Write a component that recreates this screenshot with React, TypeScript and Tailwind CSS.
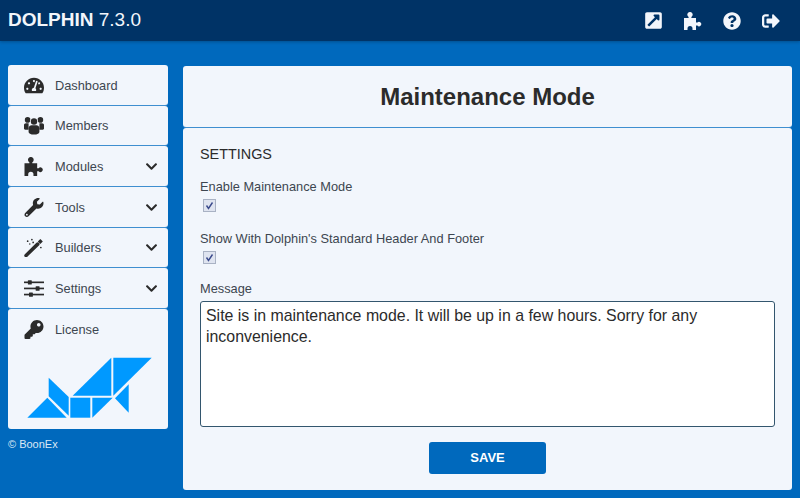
import type { ComponentType, ReactNode } from 'react';
import {
  FaChevronDown,
  FaExternalLinkSquareAlt,
  FaKey,
  FaQuestionCircle,
  FaSignOutAlt,
  FaTachometerAlt,
  FaWrench,
} from 'react-icons/fa';

type IconProps = { className?: string };
type NavItem = { label: string; icon: ComponentType<IconProps>; more?: boolean };

// font awesome 4 look, the package only has the newer shapes
function Puzzle({ className }: IconProps) {
  return (
    <svg viewBox="0 0 18 18" fill="currentColor" className={className}>
      <path d="M0 6h4.6V5a2.7 2.7 0 1 1 2.8 0v1H12v4.6h1.4a2.2 2.2 0 1 1 0 3H12V18H8.5v-1.5a2.5 2.5 0 0 0-5 0V18H0z" />
    </svg>
  );
}

function Users({ className }: IconProps) {
  return (
    <svg viewBox="0 0 20 18" fill="currentColor" className={className}>
      <circle cx="3.6" cy="3.4" r="2.8" />
      <circle cx="16.4" cy="3.4" r="2.8" />
      <path d="M0 12V8.6C0 7.5.9 6.8 2 6.8h2.6v6.4H1.2C.5 13.2 0 12.7 0 12zM20 12V8.6c0-1.1-.9-1.8-2-1.8h-2.6v6.4h3.4c.7 0 1.2-.5 1.2-1.2z" />
      <circle cx="10" cy="5" r="3.8" fill="#f2f6fc" />
      <circle cx="10" cy="5" r="3.2" />
      <path d="M4.6 15.4v-3.6c0-2 1.5-3 3-3h4.8c1.5 0 3 1 3 3v3.6c0 1.5-2 2.6-5.4 2.6s-5.4-1.1-5.4-2.6z" />
    </svg>
  );
}

function Wand({ className }: IconProps) {
  return (
    <svg viewBox="0 0 18 18" fill="currentColor" className={className}>
      <path d="M1.5 16.5 12.5 5.8" stroke="currentColor" strokeWidth="3.4" strokeLinecap="round" />
      <path d="M13.8 4.5 16.2 2.2" stroke="currentColor" strokeWidth="3.4" />
      <circle cx="3" cy="3" r=".8" />
      <circle cx="7" cy="1.5" r=".8" />
      <circle cx="8.2" cy="4.2" r=".8" />
      <circle cx="5" cy="5.6" r=".7" />
      <circle cx="15.5" cy="9" r=".8" />
    </svg>
  );
}

function Sliders({ className }: IconProps) {
  return (
    <svg viewBox="0 0 18 15" fill="currentColor" className={className}>
      <rect x="0" y="1.2" width="18" height="1.5" />
      <rect x="0" y="6.7" width="18" height="1.5" />
      <rect x="0" y="12.2" width="18" height="1.5" />
      <rect x="3.5" y="0" width="3.5" height="4" rx=".5" />
      <rect x="10.5" y="5.5" width="3.5" height="4" rx=".5" />
      <rect x="4.5" y="11" width="3.5" height="4" rx=".5" />
    </svg>
  );
}

const nav: NavItem[] = [
  { label: 'Dashboard', icon: FaTachometerAlt },
  { label: 'Members', icon: Users },
  { label: 'Modules', icon: Puzzle, more: true },
  { label: 'Tools', icon: FaWrench, more: true },
  { label: 'Builders', icon: Wand, more: true },
  { label: 'Settings', icon: Sliders, more: true },
];

function NavRow({ item }: { item: NavItem }) {
  const Icon = item.icon;
  return (
    <div className="flex h-[39.67px] items-center pt-px">
      <span className="flex w-[47px] justify-center pl-[5px]">
        <Icon className="h-[19px] w-[20px] text-[#2b2b2b]" />
      </span>
      <span className="flex-1 text-[12.8px] text-[#3d4650]">{item.label}</span>
      {item.more && <FaChevronDown className="mr-[10px] text-[13px] text-[#2b2b2b]" />}
    </div>
  );
}

function Tick() {
  return (
    <span className="flex h-[13px] w-[13px] items-center justify-center border border-[#a9b2c4] bg-[#dfe4f0]">
      <svg viewBox="0 0 11 11" className="h-[11px] w-[11px]">
        <path d="M2.5 5.5 L4.5 8.5 L8.5 2.5" fill="none" stroke="#3a4a8c" strokeWidth="1.4" />
      </svg>
    </span>
  );
}

function Field({ label, children }: { label: string; children: ReactNode }) {
  return (
    <div>
      <div className="text-[12.8px] leading-[17px] text-[#3d4650]">{label}</div>
      <div className="mt-[4px] pl-[3px]">{children}</div>
    </div>
  );
}

export default function App() {
  return (
    <div
      className="flex min-h-screen flex-col bg-[#0069bd]"
      style={{ fontFamily: '"Liberation Sans", Arial, sans-serif' }}
    >
      <header className="flex h-[41px] items-center justify-between bg-[#003366] pl-2 pr-5 shadow-[0_1px_3px_rgba(0,0,0,0.25)]">
        <div className="text-[19px] text-[#f3f6fb]">
          <span className="font-bold">DOLPHIN</span> 7.3.0
        </div>
        <div className="flex items-center gap-[21px] text-[18px] text-[#f3f6fb]">
          <FaExternalLinkSquareAlt className="text-[19px]" />
          <Puzzle className="h-[18px] w-[18px]" />
          <FaQuestionCircle />
          <FaSignOutAlt />
        </div>
      </header>

      <div className="flex gap-[15px] px-2 pt-6">
        <aside className="w-40">
          <div className="flex flex-col gap-px">
            {nav.map((item) => (
              <div key={item.label} className="rounded-[3px] bg-[#f2f6fc] shadow-[0_1px_0_#3f8fd0]">
                <NavRow item={item} />
              </div>
            ))}
            <div className="h-[120px] rounded-[3px] bg-[#f2f6fc]">
              <NavRow item={{ label: 'License', icon: FaKey }} />
              <svg viewBox="27 357 125 61" className="ml-[19px] mt-[8px] h-[61px] w-[125px]" fill="#0099ff">
                <polygon points="27.3,417.7 47.3,397.7 66.7,417.7" />
                <polygon points="48.7,377.7 68.7,397 68.7,415.7 48.7,396.3" />
                <polygon points="70.3,397.7 90.3,397.7 90.3,417.7 70.3,417.7" />
                <polygon points="92.3,397.7 112.7,397.7 92.3,417.7" />
                <polygon points="72.7,395.7 111.3,357.7 111.3,395.7" />
                <polygon points="113.3,357.7 151.7,357.7 113.3,395.7" />
                <polygon points="128.7,384.3 128.7,412.7 115,398.3" />
              </svg>
            </div>
          </div>
          <div className="mt-[7px] text-[11px] text-[#dbe8f5]">© BoonEx</div>
        </aside>

        <main className="flex w-[609px] flex-col gap-px pt-px">
          <div className="flex h-[61px] items-center justify-center rounded-[3px] bg-[#f2f6fc] shadow-[0_1px_0_#3f8fd0]">
            <h1 className="text-[24px] font-bold text-[#2b2b2b]">Maintenance Mode</h1>
          </div>
          <div className="flex h-[362px] flex-col rounded-[3px] bg-[#f2f6fc] px-[17px] pt-[18px]">
            <h2 className="text-[14.4px] leading-[17px] text-[#2b2b2b]">SETTINGS</h2>
            <div className="mt-[15px] flex flex-col gap-[18px]">
              <Field label="Enable Maintenance Mode">
                <Tick />
              </Field>
              <Field label="Show With Dolphin's Standard Header And Footer">
                <Tick />
              </Field>
            </div>
            <div className="mt-[16px] text-[12.8px] leading-[17px] text-[#3d4650]">Message</div>
            <div className="mt-[4px] h-[126px] rounded-[3px] border border-[#33566e] bg-white px-[5px] py-[3px] text-[15.9px] leading-[21px] text-[#2b2b2b]">
              Site is in maintenance mode. It will be up in a few hours. Sorry for any inconvenience.
            </div>
            <button className="mx-auto mt-[15px] h-[32px] w-[117px] rounded-[3px] bg-[#0069bd] text-[13px] font-bold text-white">
              SAVE
            </button>
          </div>
        </main>
      </div>
    </div>
  );
}
